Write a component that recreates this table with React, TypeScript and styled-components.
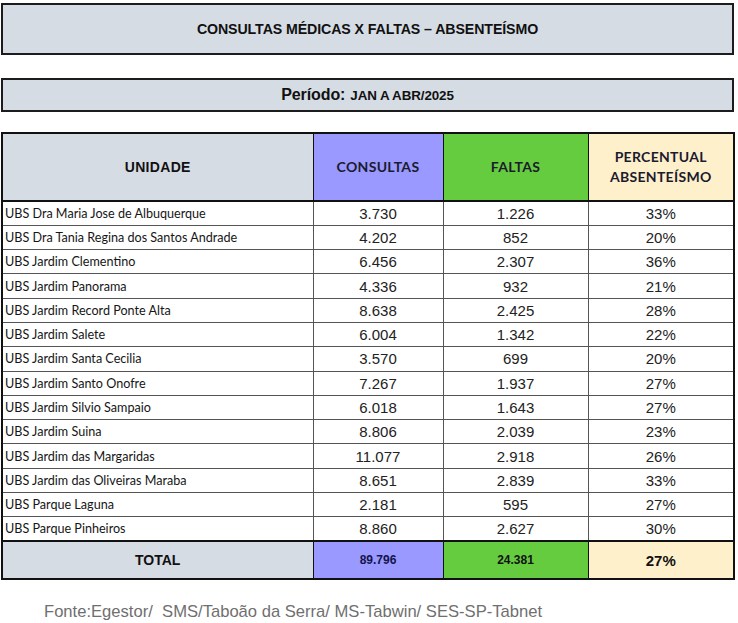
import { createGlobalStyle, styled } from "styled-components";

const GlobalStyle = createGlobalStyle`
  html, body {
    margin: 0;
    padding: 0;
    background: #ffffff;
  }
`;

const Page = styled.div`
  width: 738px;
  padding: 3px 4px 0 1px;
  box-sizing: border-box;
  display: flex;
  flex-direction: column;
  font-family: "Liberation Sans", Arial, sans-serif;
`;

const Banner = styled.div<{ $height: number; $gap: number }>`
  height: ${(p) => p.$height}px;
  margin-bottom: ${(p) => p.$gap}px;
  background: #d6dce4;
  border: 2px solid #1c1c1c;
  box-sizing: border-box;
  display: flex;
  align-items: center;
  justify-content: center;
  gap: 5px;
  color: #111;
  font-family: "Liberation Sans Narrow", "Liberation Sans", Arial, sans-serif;
  font-weight: bold;
`;

const BannerText = styled.span<{ $size: number }>`
  font-size: ${(p) => p.$size}px;
  letter-spacing: -0.1px;
`;

const Table = styled.table`
  width: 732px;
  border-collapse: collapse;
  table-layout: fixed;
  border: 2px solid #111;
`;

const HeadCell = styled.th<{ $bg: string; $font?: string; $color?: string }>`
  height: 66px;
  padding: 0;
  background: ${(p) => p.$bg};
  border: 1px solid #111;
  border-bottom: 2px solid #111;
  color: ${(p) => p.$color ?? "#1b1b2e"};
  font-family: ${(p) => p.$font ?? '"Lato", "Open Sans", sans-serif'};
  font-size: 14px;
  font-weight: bold;
  line-height: 20px;
  letter-spacing: 0.3px;
`;

const Row = styled.tr`
  height: 24.3px;
`;

const NameCell = styled.td`
  padding: 0 0 0 2px;
  border: 1px solid #555;
  border-left: none;
  font-family: "Lato", "Open Sans", sans-serif;
  font-size: 12.6px;
  color: #161616;
  white-space: nowrap;
  overflow: hidden;
`;

const NumCell = styled.td`
  padding: 0;
  border: 1px solid #555;
  border-left: 1px solid #111;
  text-align: center;
  font-size: 15px;
  color: #222;
`;

const TotalCell = styled.td<{ $bg: string; $color?: string; $size?: number }>`
  height: 36px;
  padding: 0;
  background: ${(p) => p.$bg};
  border: 1px solid #111;
  border-top: 2px solid #111;
  text-align: center;
  font-weight: bold;
  font-size: ${(p) => p.$size ?? 12}px;
  color: ${(p) => p.$color ?? "#111"};
`;

const Source = styled.div`
  margin: 22px 0 0 43px;
  font-size: 16.6px;
  color: #6f6f6f;
  white-space: pre;
`;

const rows: [string, string, string, string][] = [
  ["UBS Dra Maria Jose de Albuquerque", "3.730", "1.226", "33%"],
  ["UBS Dra Tania Regina dos Santos Andrade", "4.202", "852", "20%"],
  ["UBS Jardim Clementino", "6.456", "2.307", "36%"],
  ["UBS Jardim Panorama", "4.336", "932", "21%"],
  ["UBS Jardim Record Ponte Alta", "8.638", "2.425", "28%"],
  ["UBS Jardim Salete", "6.004", "1.342", "22%"],
  ["UBS Jardim Santa Cecilia", "3.570", "699", "20%"],
  ["UBS Jardim Santo Onofre", "7.267", "1.937", "27%"],
  ["UBS Jardim Silvio Sampaio", "6.018", "1.643", "27%"],
  ["UBS Jardim Suina", "8.806", "2.039", "23%"],
  ["UBS Jardim das Margaridas", "11.077", "2.918", "26%"],
  ["UBS Jardim das Oliveiras Maraba", "8.651", "2.839", "33%"],
  ["UBS Parque Laguna", "2.181", "595", "27%"],
  ["UBS Parque Pinheiros", "8.860", "2.627", "30%"],
];

const App = () => {
  return (
    <Page>
      <GlobalStyle />
      <Banner $height={52} $gap={23}>
        <BannerText $size={14.2}>CONSULTAS MÉDICAS X FALTAS – ABSENTEÍSMO</BannerText>
      </Banner>
      <Banner $height={34} $gap={20}>
        <BannerText $size={16}>Período:</BannerText>
        <BannerText $size={13.4}>JAN A ABR/2025</BannerText>
      </Banner>
      <Table>
        <colgroup>
          <col style={{ width: 311 }} />
          <col style={{ width: 130 }} />
          <col style={{ width: 145 }} />
          <col style={{ width: 146 }} />
        </colgroup>
        <thead>
          <tr>
            <HeadCell
              $bg="#d6dce4"
              $font='"Liberation Sans", Arial, sans-serif'
              $color="#111"
            >
              UNIDADE
            </HeadCell>
            <HeadCell $bg="#9999ff">CONSULTAS</HeadCell>
            <HeadCell $bg="#66cc3f">FALTAS</HeadCell>
            <HeadCell $bg="#fff0cc">
              PERCENTUAL
              <br />
              ABSENTEÍSMO
            </HeadCell>
          </tr>
        </thead>
        <tbody>
          {rows.map(([name, consultas, faltas, pct]) => (
            <Row key={name}>
              <NameCell>{name}</NameCell>
              <NumCell>{consultas}</NumCell>
              <NumCell>{faltas}</NumCell>
              <NumCell>{pct}</NumCell>
            </Row>
          ))}
          <tr>
            <TotalCell $bg="#d6dce4" $size={14}>
              TOTAL
            </TotalCell>
            <TotalCell $bg="#9999ff" $color="#14144a">
              89.796
            </TotalCell>
            <TotalCell $bg="#66cc3f">24.381</TotalCell>
            <TotalCell $bg="#fff0cc" $size={15}>
              27%
            </TotalCell>
          </tr>
        </tbody>
      </Table>
      <Source>Fonte:Egestor/  SMS/Taboão da Serra/ MS-Tabwin/ SES-SP-Tabnet</Source>
    </Page>
  );
};

export default App;
